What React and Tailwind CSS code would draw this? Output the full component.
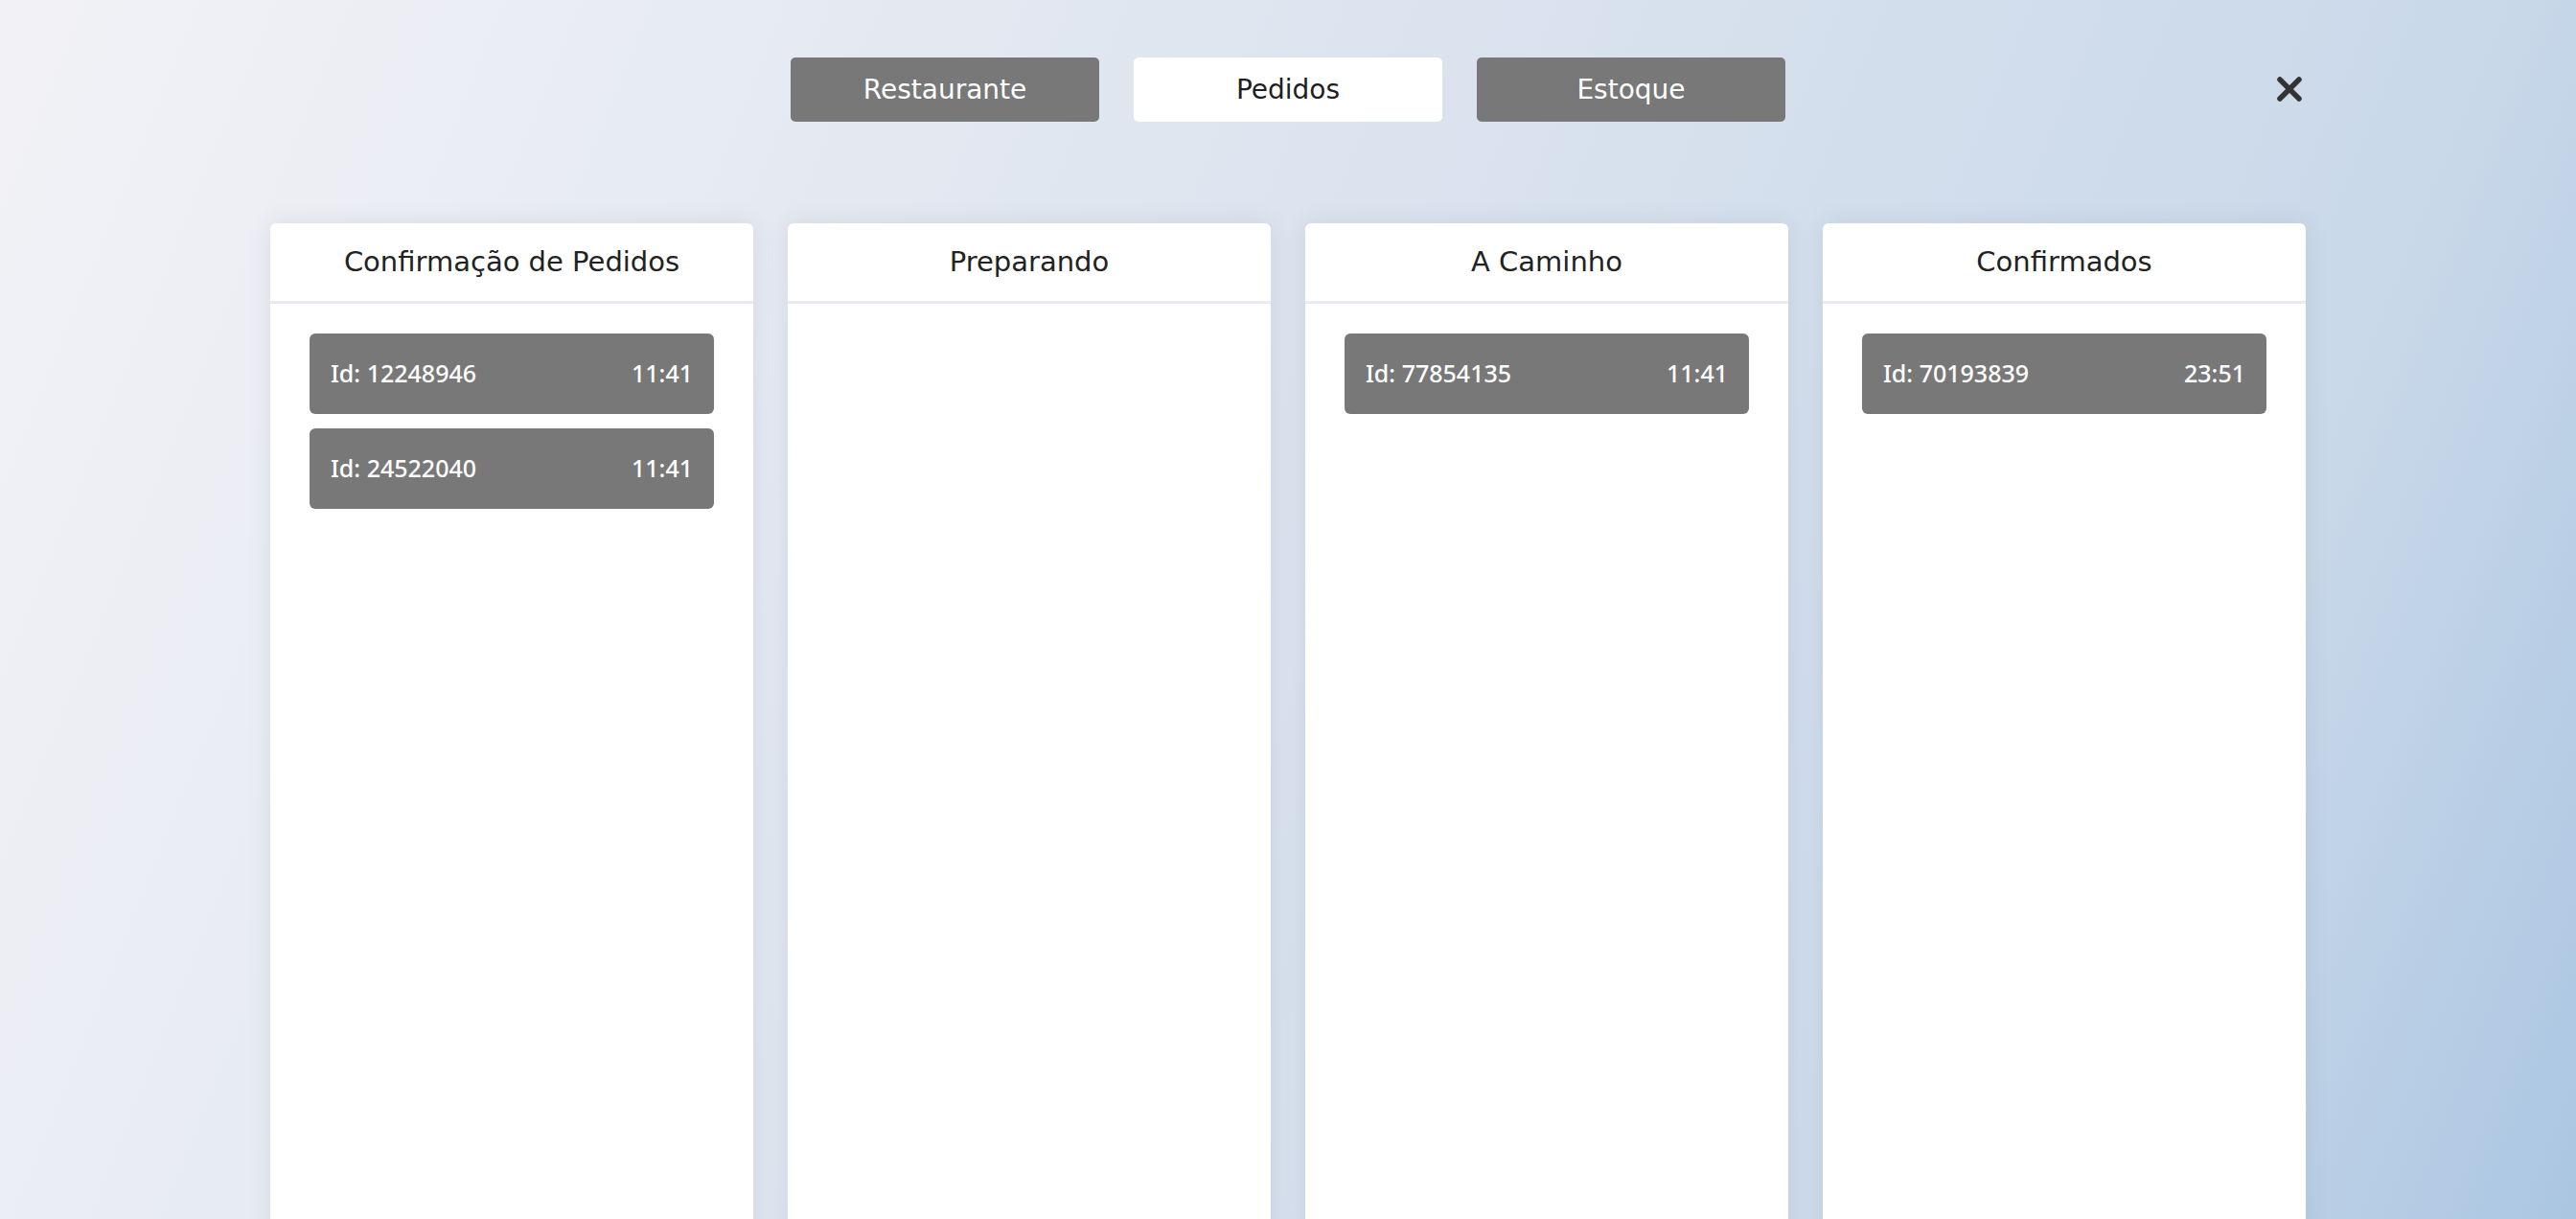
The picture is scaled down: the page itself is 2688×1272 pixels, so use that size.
import React from "react";

const columns = [
  {
    title: "Confirmação de Pedidos",
    orders: [
      { id: "12248946", time: "11:41" },
      { id: "24522040", time: "11:41" },
    ],
  },
  { title: "Preparando", orders: [] },
  { title: "A Caminho", orders: [{ id: "77854135", time: "11:41" }] },
  { title: "Confirmados", orders: [{ id: "70193839", time: "23:51" }] },
];

const tabs = ["Restaurante", "Pedidos", "Estoque"];

function App() {
  return (
    <div
      className="h-screen w-full overflow-hidden bg-[linear-gradient(112deg,#f2f2f6_0%,#e9ecf3_20%,#c9d8e9_82%,#abc6e2_100%)]"
      style={{ fontFamily: '"DejaVu Sans", "Noto Sans", sans-serif' }}
    >
      <div className="mx-auto w-[2124px] pt-[60px]">
        <div className="relative flex justify-center gap-[36px]">
          {tabs.map((tab) => (
            <button
              key={tab}
              className={
                tab === "Pedidos"
                  ? "h-[67px] w-[322px] rounded-[5px] bg-white text-[28px] text-[#1f1f1f]"
                  : "h-[67px] w-[322px] rounded-[5px] bg-[#787878] text-[28px] text-white"
              }
            >
              {tab}
            </button>
          ))}
          <button className="absolute right-[-2px] top-[14px] h-[38px] w-[38px] text-[#333333]">
            <svg viewBox="0 0 38 38" className="h-full w-full">
              <path
                d="M9 9 L29 29 M29 9 L9 29"
                stroke="currentColor"
                strokeWidth="5.5"
                strokeLinecap="round"
              />
            </svg>
          </button>
        </div>

        <div className="mt-[106px] grid grid-cols-4 gap-[36px]">
          {columns.map((col) => (
            <div
              key={col.title}
              className="h-[1100px] rounded-[6px] bg-white shadow-[0_0_24px_rgba(60,70,90,0.10)]"
            >
              <div className="flex h-[84px] items-center justify-center border-b-[3px] border-[#e8ebf1] text-[29px] text-[#222222]">
                {col.title}
              </div>
              <div className="flex flex-col gap-[15px] px-[41px] pt-[31px]">
                {col.orders.map((o) => (
                  <div
                    key={o.id}
                    className="flex h-[84px] items-center justify-between rounded-[6px] bg-[#787878] px-[22px] text-[25px] font-medium text-white"
                    style={{ fontFamily: '"Noto Sans", sans-serif' }}
                  >
                    <span>Id: {o.id}</span>
                    <span>{o.time}</span>
                  </div>
                ))}
              </div>
            </div>
          ))}
        </div>
      </div>
    </div>
  );
}

export default App;
